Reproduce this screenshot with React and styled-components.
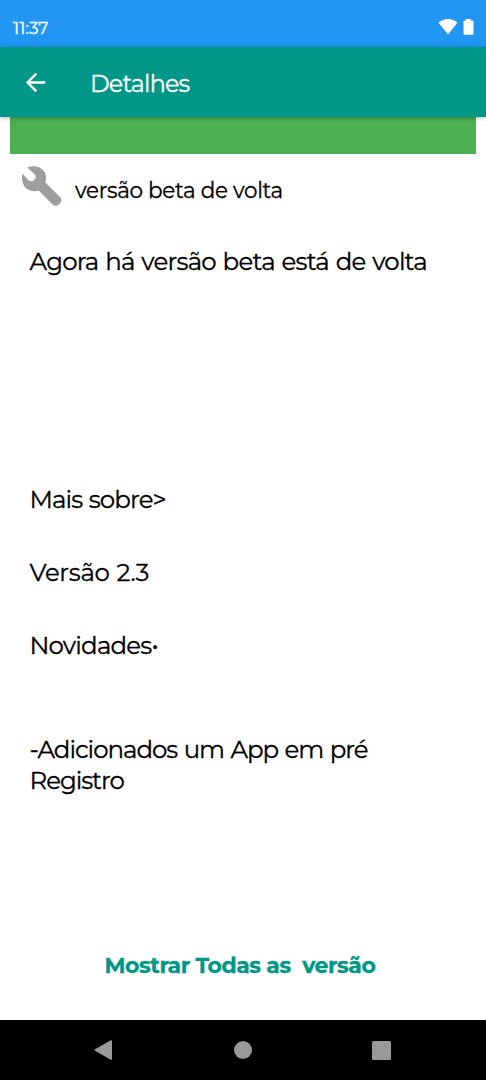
import React from 'react';
import styled, { createGlobalStyle } from 'styled-components';

const GlobalStyle = createGlobalStyle`
  * {
    box-sizing: border-box;
  }
  body {
    margin: 0;
    background: #fff;
    font-family: Montserrat, Inter, 'Open Sans', sans-serif;
    -webkit-text-stroke: 0.3px currentColor;
  }
`;

const Screen = styled.div`
  display: flex;
  flex-direction: column;
  width: 100%;
  height: 1080px;
  overflow: hidden;
  background: #fff;
`;

const StatusBar = styled.header`
  display: flex;
  align-items: center;
  justify-content: space-between;
  height: 47px;
  flex: none;
  padding: 9px 12px 0 13px;
  background: #2196f3;
  color: #fff;
`;

const StatusIcons = styled.div`
  display: flex;
  gap: 5px;
  margin-top: -3px;
`;

const AppBar = styled.nav`
  display: flex;
  align-items: center;
  gap: 40px;
  height: 70px;
  flex: none;
  padding: 1px 21px 0;
  background: #009688;
  color: #fff;
  box-shadow: 0 1px 4px rgba(0, 0, 0, 0.3);
  z-index: 1;
`;

const BackButton = styled.button`
  display: flex;
  padding: 0;
  border: none;
  background: none;
  color: inherit;
  cursor: pointer;
`;

const Banner = styled.div`
  height: 37px;
  flex: none;
  margin: 0 10px;
  background: #4caf50;
`;

const TitleRow = styled.div`
  display: flex;
  align-items: center;
  gap: 12px;
  height: 64px;
  flex: none;
  padding-left: 20px;
`;

const Label = styled.span`
  font-size: ${(props) => props.$size}px;
  letter-spacing: ${(props) => props.$spacing || 0}px;
  line-height: 30px;
  white-space: pre;
`;

const TitleLabel = styled(Label)`
  margin-top: 8px;
`;

const PageLabel = styled(Label)`
  margin-top: 2px;
`;

const Content = styled.main`
  display: flex;
  flex-direction: column;
  flex: 1;
  padding: 28px 29.5px 0;
`;

const Text = styled.p`
  margin: 0 0 ${(props) => props.$gap || 0}px;
  font-size: 24.5px;
  letter-spacing: ${(props) => props.$spacing || 0}px;
  word-spacing: 1px;
  line-height: 30.5px;
  color: #000;
  white-space: pre;
`;

const ShowAll = styled.button`
  align-self: center;
  margin-right: 6px;
  padding: 0;
  border: none;
  background: none;
  font-family: inherit;
  font-size: 22px;
  font-weight: 700;
  line-height: 30px;
  letter-spacing: ${(props) => props.$spacing || 0}px;
  color: #009688;
  white-space: pre;
  cursor: pointer;
`;

const NavigationBar = styled.footer`
  display: flex;
  align-items: center;
  justify-content: space-between;
  height: 60px;
  flex: none;
  padding: 0 95px 0 94px;
  background: #000;
`;

const App = () => {
  return (
    <>
      <GlobalStyle />
      <Screen>
        <StatusBar>
          <Label $size={17}>11:37</Label>
          <StatusIcons>
            <svg width="20" height="17" viewBox="0 0 20 17" fill="#fff">
              <path d="M10 16.500L.6 4.800C3 2.200 6.500 1 10 1s7 1.200 9.400 3.800z" />
            </svg>
            <svg width="11" height="17" viewBox="0 0 11 17" fill="#fff">
              <path d="M3 1h5v1.500h1.500q1 0 1 1V16q0 .7-1 .7h-8q-1 0-1-.7V3.500q0-1 1-1H3z" />
            </svg>
          </StatusIcons>
        </StatusBar>
        <AppBar>
          <BackButton aria-label="Voltar">
            <svg width="29" height="29" viewBox="0 0 24 24" fill="currentColor">
              <path d="M20 11H7.830l5.590-5.590L12 4l-8 8 8 8 1.410-1.410L7.830 13H20z" />
            </svg>
          </BackButton>
          <PageLabel $size={23.8} $spacing={-0.8}>Detalhes</PageLabel>
        </AppBar>
        <Banner />
        <TitleRow>
          <svg width="43" height="43" viewBox="12 13.5 129 129" fill="#9e9e9e">
            <path d="M34 21Q43 17 55 17Q72 18 83 31Q94 45 88 66L133 110Q140 118 132 129Q123 140 112 134L68 90Q47 96 31 84Q14 69 19 39L38 60Q43 63 49 62L56 57Q60 52 59 44Z" />
          </svg>
          <TitleLabel $size={21.5} $spacing={-0.3}>versão beta de volta</TitleLabel>
        </TitleRow>
        <Content>
          <Text $gap={207.5} $spacing={-0.77}>Agora há versão beta está de volta</Text>
          <Text $gap={42.5} $spacing={-0.9}>Mais sobre&gt;</Text>
          <Text $gap={42.5} $spacing={-0.35}>Versão 2.3</Text>
          <Text $gap={73.5} $spacing={-0.8}>Novidades•</Text>
          <Text $spacing={-1.03}>-Adicionados um App em pré</Text>
          <Text $gap={155.5} $spacing={-1.05}>Registro</Text>
          <ShowAll $spacing={-0.45}>{'Mostrar Todas as  versão'}</ShowAll>
        </Content>
        <NavigationBar>
          <svg width="19" height="20" viewBox="0 0 19 20" fill="#999">
            <path d="M1 9.200L16.700.3Q18 0 18 1v18q0 1-1.300.7L1 10.800Q0 10 1 9.200z" />
          </svg>
          <svg width="18" height="18" viewBox="0 0 18 18" fill="#999">
            <circle cx="9" cy="9" r="9" />
          </svg>
          <svg width="19" height="19" viewBox="0 0 19 19" fill="#999">
            <rect width="19" height="19" rx="1.500" />
          </svg>
        </NavigationBar>
      </Screen>
    </>
  );
};

export default App;
